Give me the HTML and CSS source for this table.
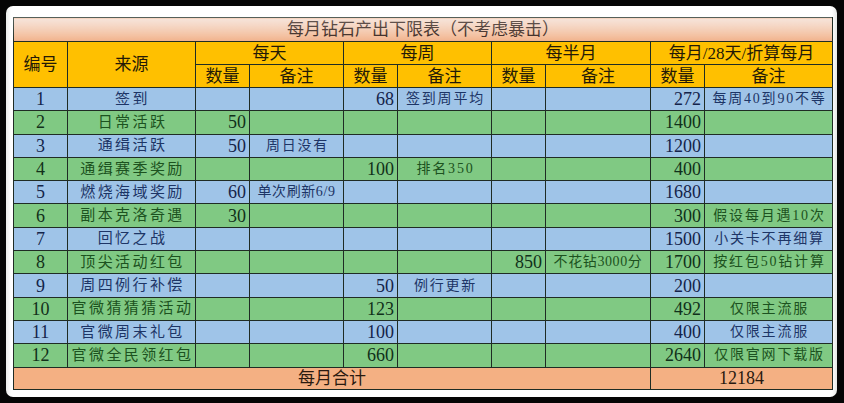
FILE: index.html
```html
<!DOCTYPE html>
<html lang="zh-CN">
<head>
<meta charset="utf-8">
<title>每月钻石产出下限表</title>
<link rel="stylesheet" href="styles.css">
</head>
<body>
<div class="card">
  <table class="sheet">
    <colgroup>
      <col class="w54"><col class="w128"><col class="w54"><col class="w94"><col class="w54"><col class="w94"><col class="w54"><col class="w105"><col class="w54"><col class="w128">
    </colgroup>
    <tr class="title"><td colspan="10">每月钻石产出下限表（不考虑暴击）</td></tr>
    <tr class="head h1">
      <td rowspan="2">编号</td><td rowspan="2">来源</td>
      <td colspan="2">每天</td><td colspan="2">每周</td><td colspan="2">每半月</td><td colspan="2">每月/28天/折算每月</td>
    </tr>
    <tr class="head h2">
      <td>数量</td><td>备注</td><td>数量</td><td>备注</td><td>数量</td><td>备注</td><td>数量</td><td>备注</td>
    </tr>
    <tr class="row b"><td class="id">1</td><td class="src">签到</td><td class="n"></td><td class="note"></td><td class="n">68</td><td class="note">签到周平均</td><td class="n"></td><td class="note"></td><td class="n">272</td><td class="note">每周40到90不等</td></tr>
    <tr class="row g"><td class="id">2</td><td class="src">日常活跃</td><td class="n">50</td><td class="note"></td><td class="n"></td><td class="note"></td><td class="n"></td><td class="note"></td><td class="n">1400</td><td class="note"></td></tr>
    <tr class="row b"><td class="id">3</td><td class="src">通缉活跃</td><td class="n">50</td><td class="note">周日没有</td><td class="n"></td><td class="note"></td><td class="n"></td><td class="note"></td><td class="n">1200</td><td class="note"></td></tr>
    <tr class="row g"><td class="id">4</td><td class="src">通缉赛季奖励</td><td class="n"></td><td class="note"></td><td class="n">100</td><td class="note">排名350</td><td class="n"></td><td class="note"></td><td class="n">400</td><td class="note"></td></tr>
    <tr class="row b"><td class="id">5</td><td class="src">燃烧海域奖励</td><td class="n">60</td><td class="note tight">单次刷新6/9</td><td class="n"></td><td class="note"></td><td class="n"></td><td class="note"></td><td class="n">1680</td><td class="note"></td></tr>
    <tr class="row g"><td class="id">6</td><td class="src">副本克洛奇遇</td><td class="n">30</td><td class="note"></td><td class="n"></td><td class="note"></td><td class="n"></td><td class="note"></td><td class="n">300</td><td class="note">假设每月遇10次</td></tr>
    <tr class="row b"><td class="id">7</td><td class="src">回忆之战</td><td class="n"></td><td class="note"></td><td class="n"></td><td class="note"></td><td class="n"></td><td class="note"></td><td class="n">1500</td><td class="note">小关卡不再细算</td></tr>
    <tr class="row g"><td class="id">8</td><td class="src">顶尖活动红包</td><td class="n"></td><td class="note"></td><td class="n"></td><td class="note"></td><td class="n">850</td><td class="note tight">不花钻3000分</td><td class="n">1700</td><td class="note">按红包50钻计算</td></tr>
    <tr class="row b"><td class="id">9</td><td class="src">周四例行补偿</td><td class="n"></td><td class="note"></td><td class="n">50</td><td class="note">例行更新</td><td class="n"></td><td class="note"></td><td class="n">200</td><td class="note"></td></tr>
    <tr class="row g"><td class="id">10</td><td class="src">官微猜猜猜活动</td><td class="n"></td><td class="note"></td><td class="n">123</td><td class="note"></td><td class="n"></td><td class="note"></td><td class="n">492</td><td class="note">仅限主流服</td></tr>
    <tr class="row b"><td class="id">11</td><td class="src">官微周末礼包</td><td class="n"></td><td class="note"></td><td class="n">100</td><td class="note"></td><td class="n"></td><td class="note"></td><td class="n">400</td><td class="note">仅限主流服</td></tr>
    <tr class="row g"><td class="id">12</td><td class="src">官微全民领红包</td><td class="n"></td><td class="note"></td><td class="n">660</td><td class="note"></td><td class="n"></td><td class="note"></td><td class="n">2640</td><td class="note">仅限官网下载版</td></tr>
    <tr class="total"><td colspan="8" class="tlabel">每月合计</td><td colspan="2" class="tval">12184</td></tr>
  </table>
  <div class="gloss"></div>
</div>
</body>
</html>
```

FILE: styles.css
```css
html, body {
  margin: 0;
  padding: 0;
  background: #050505;
}
body {
  width: 844px;
  height: 403px;
  overflow: hidden;
  font-family: "Liberation Serif", "Noto Sans CJK SC", serif;
}
.card {
  position: relative;
  margin: 6px 0 0 6px;
  width: 831px;
  height: 391px;
  box-sizing: border-box;
  padding: 11px 5px 0 7px;
  background: linear-gradient(to right, #e9ebe9 0px, #ffffff 5px, #ffffff 826px, #e6e8e6 831px);
  border-radius: 7px;
}
.sheet {
  border-collapse: collapse;
  table-layout: fixed;
  width: 819px;
}
.w54 { width: 54px; }
.w94 { width: 94px; }
.w105 { width: 105px; }
.w128 { width: 128px; }
.sheet td {
  border: 1.6px solid #1f2c24;
  padding: 0;
  white-space: nowrap;
  overflow: hidden;
  line-height: 1;
}
.title td {
  height: 23px;
  text-align: center;
  font-size: 17px;
  color: #3a2720;
  background: linear-gradient(to bottom, #f4dccf 0%, #f3c6aa 55%, #f2b28b 100%);
}
.head td {
  background: #ffc000;
  text-align: center;
  font-size: 17px;
  color: #241a06;
}
.h1 td { height: 22px; }
.h2 td { height: 22px; }
.row td { height: 22.3px; }
.b td { background: #9fc4e8; color: #1d3566; }
.g td { background: #80c983; color: #1c5220; }
.id {
  text-align: center;
  font-size: 18px;
}
.g .id { color: #12301a; }
.b .id { color: #14254a; }
.src {
  text-align: center;
  font-size: 15px;
  letter-spacing: 2.4px;
  text-indent: 2px;
}
.n {
  text-align: right;
  font-size: 18px;
  padding-right: 3px !important;
}
.g .n { color: #10301a; }
.b .n { color: #14234a; }
.note {
  text-align: center;
  font-size: 14px;
  letter-spacing: 1.8px;
  text-indent: 2px;
}
.note.tight {
  letter-spacing: 0.6px;
  text-indent: 0;
}
.total td {
  height: 21.6px;
  background: #f4b083;
  text-align: center;
  color: #2a1a10;
}
.tlabel { font-size: 17px; }
.tval { font-size: 18px; }
.gloss {
  position: absolute;
  left: 7px;
  top: 11px;
  width: 819px;
  height: 24px;
  pointer-events: none;
  background: linear-gradient(to bottom, rgba(255,255,255,0.25), rgba(255,255,255,0));
}
```
